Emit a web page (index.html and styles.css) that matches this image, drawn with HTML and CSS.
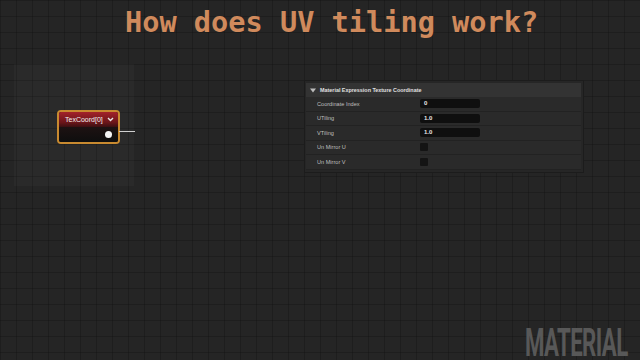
FILE: index.html
```html
<!DOCTYPE html>
<html lang="en">
<head>
    <meta charset="UTF-8">
    <meta name="viewport" content="width=device-width, initial-scale=1.0">
    <title>How does UV tiling work?</title>
    <link rel="stylesheet" href="styles.css">
</head>
<body>
    <div class="graph">
        <h1 class="title">How does UV tiling work?</h1>

        <div class="focus-area"></div>

        <div class="node">
            <div class="node-head">
                <span>TexCoord[0]</span>
                <svg class="chevron" width="7" height="5" viewBox="0 0 7 5">
                    <path d="M1 1 L3.5 3.5 L6 1" fill="none" stroke="#e8e8e8" stroke-width="1.4"/>
                </svg>
            </div>
            <div class="node-body">
                <span class="pin"></span>
            </div>
        </div>
        <div class="wire"></div>

        <div class="details">
            <div class="details-head">
                <svg width="6" height="5" viewBox="0 0 6 5"><path d="M0 0.5 H6 L3 4.5 Z" fill="#bdbdbd"/></svg>
                <span>Material Expression Texture Coordinate</span>
            </div>
            <div class="row">
                <span class="label">Coordinate Index</span>
                <span class="field">0</span>
            </div>
            <div class="row">
                <span class="label">UTiling</span>
                <span class="field">1.0</span>
            </div>
            <div class="row">
                <span class="label">VTiling</span>
                <span class="field">1.0</span>
            </div>
            <div class="row">
                <span class="label">Un Mirror U</span>
                <span class="check"></span>
            </div>
            <div class="row">
                <span class="label">Un Mirror V</span>
                <span class="check"></span>
            </div>
        </div>

        <div class="watermark">MATERIAL</div>
    </div>
</body>
</html>
```

FILE: styles.css
```css
body {
    margin: 0;
    padding: 0;
    background-color: #252525;
    font-family: "Liberation Sans", Arial, sans-serif;
}
.graph {
    position: relative;
    width: 640px;
    height: 360px;
    overflow: hidden;
    background-color: #252525;
    background-image:
        linear-gradient(to right, rgba(0,0,0,0.18) 1px, transparent 1px),
        linear-gradient(to bottom, rgba(0,0,0,0.18) 1px, transparent 1px);
    background-size: 16px 16px;
}
.title {
    margin: 0;
    padding-top: 5px;
    padding-left: 125px;
    font-family: "DejaVu Sans Mono", monospace;
    font-weight: bold;
    font-size: 28.6px;
    line-height: 34px;
    color: #d08a5c;
}
.focus-area {
    position: absolute;
    left: 14px;
    top: 64px;
    width: 120px;
    height: 122px;
    background-color: rgba(255,255,255,0.025);
}
.node {
    position: absolute;
    left: 57px;
    top: 110px;
    width: 59px;
    height: 30px;
    border: 2px solid #c88a30;
    border-radius: 4px;
    overflow: hidden;
    background-color: #121212;
}
.node-head {
    height: 15px;
    display: flex;
    align-items: center;
    justify-content: space-between;
    padding: 0 4px 0 6px;
    background: linear-gradient(to bottom, #a3222a, #6a1519 70%, #3a1012);
    color: #f2f2f2;
    font-size: 7px;
}
.node-body {
    height: 15px;
    display: flex;
    align-items: center;
    justify-content: flex-end;
    padding-right: 6px;
    background: linear-gradient(to bottom, #1d1212, #0e0e0e);
}
.pin {
    width: 7px;
    height: 7px;
    border-radius: 50%;
    background-color: #f4f4f4;
}
.wire {
    position: absolute;
    left: 119px;
    top: 131px;
    width: 16px;
    height: 1px;
    background-color: #cfcfcf;
}
.details {
    position: absolute;
    left: 304px;
    top: 80px;
    width: 280px;
    height: 93px;
    background-color: #262626;
    border: 1px solid #1c1c1c;
    box-sizing: border-box;
    padding: 2px 2px 0 1px;
}
.details-head {
    height: 14px;
    display: flex;
    align-items: center;
    gap: 4px;
    padding-left: 4px;
    background-color: #333333;
    color: #e0e0e0;
    font-size: 5.4px;
    font-weight: bold;
}
.row {
    height: 14.5px;
    display: flex;
    align-items: center;
    border-bottom: 1px solid #222;
    box-sizing: border-box;
    background-color: #2a2a2a;
}
.label {
    width: 103px;
    padding-left: 11px;
    font-size: 5.6px;
    color: #bfbfbf;
}
.field {
    width: 56px;
    height: 9px;
    line-height: 9px;
    padding-left: 4px;
    border-radius: 2px;
    background-color: #0f0f0f;
    color: #e6e6e6;
    font-size: 6px;
    font-weight: bold;
}
.check {
    width: 8px;
    height: 8px;
    border-radius: 1px;
    background-color: #141414;
}
.watermark {
    position: absolute;
    right: 12px;
    top: 328px;
    white-space: nowrap;
    font-family: "Roboto", sans-serif;
    font-weight: bold;
    font-size: 38px;
    line-height: 30px;
    letter-spacing: -1px;
    color: #585858;
    transform: scaleX(0.585);
    transform-origin: right top;
}
```
